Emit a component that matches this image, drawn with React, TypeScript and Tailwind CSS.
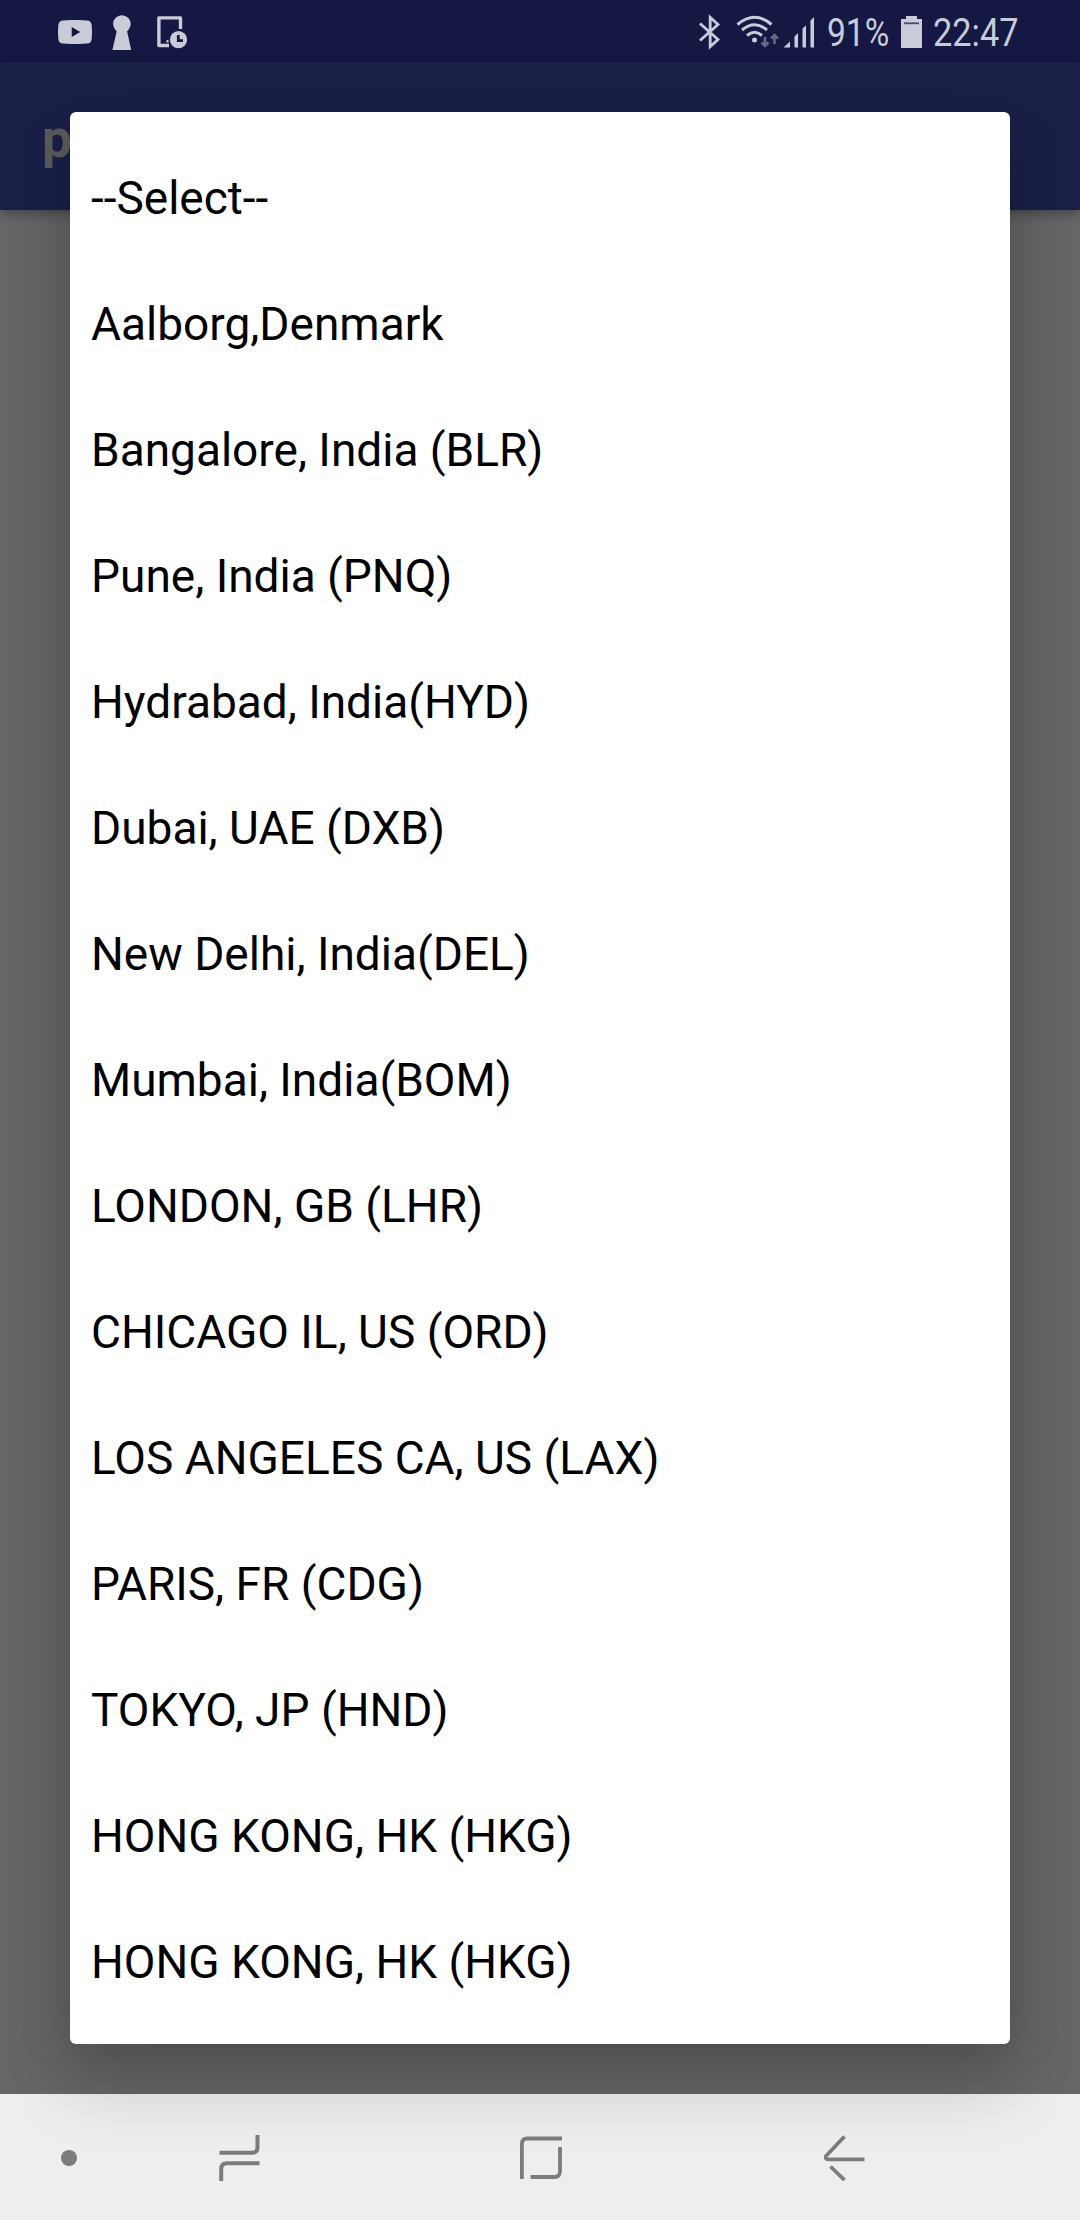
const options = [
  '--Select--',
  'Aalborg,Denmark',
  'Bangalore, India (BLR)',
  'Pune, India (PNQ)',
  'Hydrabad, India(HYD)',
  'Dubai, UAE (DXB)',
  'New Delhi, India(DEL)',
  'Mumbai, India(BOM)',
  'LONDON, GB (LHR)',
  'CHICAGO IL, US (ORD)',
  'LOS ANGELES CA, US (LAX)',
  'PARIS, FR (CDG)',
  'TOKYO, JP (HND)',
  'HONG KONG, HK (HKG)',
  'HONG KONG, HK (HKG)',
];

function NotificationIcons() {
  return (
    <div className="flex items-center">
      <svg className="h-[24px] w-[34px]" viewBox="0 0 34 24" fill="currentColor">
        <path fillRule="evenodd" d="M5 0.4Q17 -0.5 29 0.4Q33 0.6 33.6 4.500Q34.400 12 33.600 19.500Q33 23.400 29 23.600Q17 24.500 5 23.600Q1 23.400 0.400 19.500Q-0.400 12 0.400 4.500Q1 0.600 5 0.400ZM13.700 7V17L22.200 12Z" />
      </svg>
      <svg className="ml-[20px] h-[35px] w-[20px]" viewBox="0 0 20 35" fill="currentColor">
        <circle cx="9.900" cy="9" r="8.800" />
        <path d="M5.200 14H14.600L19.200 35H0.400Z" />
      </svg>
      <svg className="ml-[25px] h-[33px] w-[31px]" viewBox="0 0 31 33" fill="none">
        <path d="M23.500 13V1.900H1.900V29.500H12" stroke="currentColor" strokeWidth="3.400" strokeLinejoin="round" />
        <circle cx="10.500" cy="25.300" r="1.200" fill="currentColor" />
        <circle cx="21.500" cy="23.700" r="8.600" fill="currentColor" />
        <path d="M21.300 19V24.600H26" stroke="#141843" strokeWidth="2.800" />
      </svg>
    </div>
  );
}

function SystemIcons() {
  return (
    <div className="flex items-center">
      <svg className="h-[36px] w-[22px]" viewBox="0 0 22 36" fill="none" stroke="currentColor" strokeWidth="2.800">
        <path d="M1 9.500L19 25.500L11.200 32.500V3.500L19 10.500L1 26.500" />
      </svg>
      <svg className="ml-[15px] h-[34px] w-[44px]" viewBox="0 0 44 34" fill="none" stroke="currentColor">
        <path d="M1.500 9.500Q18.500 -5 35.500 9.500" strokeWidth="3" />
        <path d="M6 15Q18.500 4.500 31 15" strokeWidth="3" />
        <path d="M11 20.500Q18.500 14 26 20.500" strokeWidth="3" />
        <circle cx="18.500" cy="25" r="2.500" fill="currentColor" stroke="none" />
        <path d="M29 22V31M25.500 27.500L29 31L32.500 27.500M38.500 29V20M35 23.500L38.500 20L42 23.500" stroke="#66698a" strokeWidth="2.600" />
      </svg>
      <svg className="ml-[3px] h-[32px] w-[33px]" viewBox="0 0 33 32" fill="currentColor">
        <path d="M0.500 31.500L7 25.500V31.500ZM11.500 31.500V20.500L15 17V31.500ZM19.500 31.500V12.500L23 9.500V31.500ZM27.500 31.500V4.500L31 1V31.500Z" />
      </svg>
    </div>
  );
}

function StatusBar() {
  return (
    <header className="flex h-[62px] items-center justify-between bg-[#141843] pt-[2px] pr-[62px] pl-[58px] text-[#cacbd8]">
      <NotificationIcons />
      <div className="flex items-center">
        <SystemIcons />
        <span className="ml-[11px] w-[64px] origin-left scale-x-[0.86] pt-[3px] text-[39px] leading-none whitespace-nowrap">91%</span>
        <svg className="ml-[10px] h-[32px] w-[21px]" viewBox="0 0 21 32" fill="currentColor">
          <path d="M5 0H16V3H21V32H0V3H5Z" />
          <path d="M3 7.300H18" stroke="#4b4d6b" strokeWidth="1.800" />
        </svg>
        <span className="ml-[11px] w-[85px] origin-left scale-x-[0.88] pt-[3px] text-[39px] leading-none whitespace-nowrap">22:47</span>
      </div>
    </header>
  );
}

function NavigationBar() {
  return (
    <nav className="flex h-[126px] items-center bg-[#eeeeee] pt-[2px] text-[#7c7c7c]">
      <span className="ml-[61px] size-[16px] rounded-full bg-current" />
      <svg className="ml-[142px] h-[48px] w-[42px]" viewBox="0 0 42 48" fill="none" stroke="currentColor" strokeWidth="4">
        <path d="M0.500 18.800H33Q38.500 18.800 38.500 13.500V1M40.500 29.200H8Q2.200 29.200 2.200 35V47" />
      </svg>
      <svg className="ml-[259px] h-[44px] w-[42px]" viewBox="0 0 42 44" fill="none" stroke="currentColor" strokeWidth="3.800">
        <path d="M42 2.500H7Q1.900 2.500 1.900 8V43M40 11V35Q40 41 34.500 41H10.500" />
      </svg>
      <svg className="ml-[262px] h-[46px] w-[41px]" viewBox="0 0 41 46" fill="none" stroke="currentColor" strokeWidth="3.800" strokeLinejoin="round">
        <path d="M20.500 1.500L2 21Q1 24.400 4.500 24.400H40.500M6.500 31.500L20.500 45" />
      </svg>
    </nav>
  );
}

export default function App() {
  return (
    <div className="relative flex h-[2220px] w-[1080px] flex-col overflow-hidden bg-[#666666] font-[Roboto,sans-serif]">
      <StatusBar />
      <div className="flex h-[148px] items-center bg-[#1b2049] pt-[6px] pl-[42px] text-[53px] leading-none font-bold text-[#5c5e5d] shadow-[0_4px_10px_rgba(0,0,0,0.3)]">
        p
      </div>
      <main className="flex-1" />
      <NavigationBar />
      <ul
        role="listbox"
        className="absolute top-[112px] left-[70px] w-[940px] rounded-[6px] bg-white py-[21px] text-[46px] text-black shadow-[0_42px_70px_rgba(0,0,0,0.16),0_4px_56px_rgba(0,0,0,0.14)]"
      >
        {options.map((option, index) => (
          <li key={index} role="option" className="flex h-[126px] items-center pt-[4px] pl-[21px] whitespace-nowrap">
            {option}
          </li>
        ))}
      </ul>
    </div>
  );
}
